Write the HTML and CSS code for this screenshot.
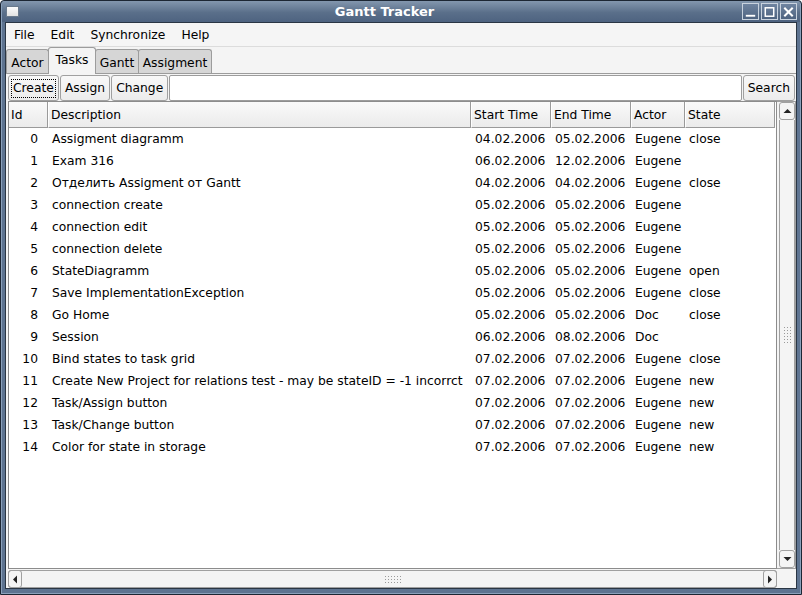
FILE: index.html
```html
<!DOCTYPE html>
<html>
<head>
<meta charset="utf-8">
<link rel="stylesheet" href="styles.css">
</head>
<body>
<div class="window">
  <div class="titlebar">
    <div class="wicon"></div>
    <div class="title">Gantt Tracker</div>
    <div class="wbtns">
      <div class="wbtn"><svg width="16" height="16" viewBox="0 0 16 16"><rect x="3" y="11" width="10" height="2" fill="#fff"/></svg></div>
      <div class="wbtn"><svg width="16" height="16" viewBox="0 0 16 16"><rect x="3.5" y="3.5" width="9" height="9" fill="none" stroke="#fff" stroke-width="1.6"/></svg></div>
      <div class="wbtn"><svg width="16" height="16" viewBox="0 0 16 16"><path d="M3.5 3.5 L12.5 12.5 M12.5 3.5 L3.5 12.5" stroke="#fff" stroke-width="2.2"/></svg></div>
    </div>
  </div>
  <div class="client">
    <div class="menubar">
      <span class="menu">File</span>
      <span class="menu">Edit</span>
      <span class="menu">Synchronize</span>
      <span class="menu">Help</span>
    </div>
    <div class="tabbar">
      <div class="tab t-actor">Actor</div>
      <div class="tab active t-tasks">Tasks</div>
      <div class="tab t-gantt">Gantt</div>
      <div class="tab t-assig">Assigment</div>
    </div>
    <div class="panel">
      <div class="toolbar">
        <div class="btn focus"><span>Create</span></div>
        <div class="btn">Assign</div>
        <div class="btn">Change</div>
        <div class="search"></div>
        <div class="btn">Search</div>
      </div>
      <div class="gridarea">
        <div class="table">
          <div class="row head">
            <div class="c id">Id</div>
            <div class="c desc">Description</div>
            <div class="c st">Start Time</div>
            <div class="c et">End Time</div>
            <div class="c ac">Actor</div>
            <div class="c sa">State</div>
          </div>
          <div class="body">
            <div class="row"><div class="c id">0</div><div class="c desc">Assigment diagramm</div><div class="c st">04.02.2006</div><div class="c et">05.02.2006</div><div class="c ac">Eugene</div><div class="c sa">close</div></div>
            <div class="row"><div class="c id">1</div><div class="c desc">Exam 316</div><div class="c st">06.02.2006</div><div class="c et">12.02.2006</div><div class="c ac">Eugene</div><div class="c sa"></div></div>
            <div class="row"><div class="c id">2</div><div class="c desc">Отделить Assigment от Gantt</div><div class="c st">04.02.2006</div><div class="c et">04.02.2006</div><div class="c ac">Eugene</div><div class="c sa">close</div></div>
            <div class="row"><div class="c id">3</div><div class="c desc">connection create</div><div class="c st">05.02.2006</div><div class="c et">05.02.2006</div><div class="c ac">Eugene</div><div class="c sa"></div></div>
            <div class="row"><div class="c id">4</div><div class="c desc">connection edit</div><div class="c st">05.02.2006</div><div class="c et">05.02.2006</div><div class="c ac">Eugene</div><div class="c sa"></div></div>
            <div class="row"><div class="c id">5</div><div class="c desc">connection delete</div><div class="c st">05.02.2006</div><div class="c et">05.02.2006</div><div class="c ac">Eugene</div><div class="c sa"></div></div>
            <div class="row"><div class="c id">6</div><div class="c desc">StateDiagramm</div><div class="c st">05.02.2006</div><div class="c et">05.02.2006</div><div class="c ac">Eugene</div><div class="c sa">open</div></div>
            <div class="row"><div class="c id">7</div><div class="c desc">Save ImplementationException</div><div class="c st">05.02.2006</div><div class="c et">05.02.2006</div><div class="c ac">Eugene</div><div class="c sa">close</div></div>
            <div class="row"><div class="c id">8</div><div class="c desc">Go Home</div><div class="c st">05.02.2006</div><div class="c et">05.02.2006</div><div class="c ac">Doc</div><div class="c sa">close</div></div>
            <div class="row"><div class="c id">9</div><div class="c desc">Session</div><div class="c st">06.02.2006</div><div class="c et">08.02.2006</div><div class="c ac">Doc</div><div class="c sa"></div></div>
            <div class="row"><div class="c id">10</div><div class="c desc">Bind states to task grid</div><div class="c st">07.02.2006</div><div class="c et">07.02.2006</div><div class="c ac">Eugene</div><div class="c sa">close</div></div>
            <div class="row"><div class="c id">11</div><div class="c desc">Create New Project for relations test - may be stateID = -1 incorrct</div><div class="c st">07.02.2006</div><div class="c et">07.02.2006</div><div class="c ac">Eugene</div><div class="c sa">new</div></div>
            <div class="row"><div class="c id">12</div><div class="c desc">Task/Assign button</div><div class="c st">07.02.2006</div><div class="c et">07.02.2006</div><div class="c ac">Eugene</div><div class="c sa">new</div></div>
            <div class="row"><div class="c id">13</div><div class="c desc">Task/Change button</div><div class="c st">07.02.2006</div><div class="c et">07.02.2006</div><div class="c ac">Eugene</div><div class="c sa">new</div></div>
            <div class="row"><div class="c id">14</div><div class="c desc">Color for state in storage</div><div class="c st">07.02.2006</div><div class="c et">07.02.2006</div><div class="c ac">Eugene</div><div class="c sa">new</div></div>
          </div>
        </div>
        <div class="vscroll">
          <div class="sbtn"><svg width="9" height="6" viewBox="0 0 9 6"><path d="M0.5 5 L4.5 1 L8.5 5 Z" fill="#222"/></svg></div>
          <div class="vthumb"><div class="grip vgrip"></div></div>
          <div class="sbtn"><svg width="9" height="6" viewBox="0 0 9 6"><path d="M0.5 1 L4.5 5 L8.5 1 Z" fill="#222"/></svg></div>
        </div>
        <div class="hscroll">
          <div class="hbtn"><svg width="6" height="9" viewBox="0 0 6 9"><path d="M5 0.5 L1 4.5 L5 8.5 Z" fill="#222"/></svg></div>
          <div class="hthumb"><div class="grip hgrip"></div></div>
          <div class="hbtn"><svg width="6" height="9" viewBox="0 0 6 9"><path d="M1 0.5 L5 4.5 L1 8.5 Z" fill="#222"/></svg></div>
        </div>
        <div class="corner"></div>
      </div>
    </div>
  </div>
</div>
</body>
</html>
```
FILE: styles.css
```css
* { box-sizing: border-box; }
html, body { margin: 0; padding: 0; }
body {
  width: 802px;
  height: 595px;
  overflow: hidden;
  font-family: "DejaVu Sans", sans-serif;
  font-size: 12.3px;
  color: #000;
  background: #fff;
}
.window {
  width: 802px;
  height: 595px;
  display: flex;
  flex-direction: column;
  background: #5d7390;
  border: 1px solid #1c2633;
  border-radius: 4px 4px 0 0;
  padding: 0 4px 5px 4px;
  box-shadow: inset 0 0 0 1px #8aa0ba;
}
.titlebar {
  height: 21px;
  display: flex;
  align-items: center;
  position: relative;
  background: linear-gradient(#8397ae, #5a6f8a 55%, #4e6380);
  margin: 0 -3px;
  padding: 0 3px;
  border-radius: 3px 3px 0 0;
}
.wicon {
  width: 13px;
  height: 11px;
  margin-left: 1px;
  background: linear-gradient(#fcfcfc, #e2e2e2);
  border: 1px solid #6a7a8c;
}
.title {
  flex: 1;
  text-align: center;
  color: #fff;
  font-weight: bold;
  font-size: 13px;
  padding-left: 8px;
}
.wbtns { display: flex; gap: 2px; }
.wbtn {
  width: 17px;
  height: 17px;
  border: 1px solid #c8d2de;
  background: linear-gradient(#6f84a0, #4e6380);
  display: flex;
  align-items: center;
  justify-content: center;
}
.wbtn svg { display: block; }
.client {
  flex: 1;
  display: flex;
  flex-direction: column;
  background: #f4f4f4;
  border: 1px solid #2a3644;
  min-height: 0;
}
.menubar {
  height: 24px;
  display: flex;
  align-items: center;
  border-bottom: 1px solid #dcdcdc;
  background: #f5f5f5;
}
.menu { padding: 0 8px; line-height: 24px; }
.tabbar {
  height: 26px;
  display: flex;
  align-items: flex-end;
  position: relative;
  z-index: 1;
}
.tab {
  height: 24px;
  padding-top: 2px;
  display: flex;
  align-items: center;
  justify-content: center;
  background: #d6d6d6;
  border: 1px solid #9c9c9c;
  border-bottom: none;
  border-radius: 3px 3px 0 0;
  margin-right: -1px;
}
.t-actor { width: 43px; }
.t-tasks { width: 48px; }
.t-gantt { width: 44px; }
.t-assig { width: 74px; }
.tab.active {
  height: 27px;
  background: #f4f4f4;
  padding: 0 0 2px 0;
  margin-bottom: -1px;
  position: relative;
}
.panel {
  flex: 1;
  display: flex;
  flex-direction: column;
  border-top: 1px solid #9c9c9c;
  padding: 1px 1px 0 2px;
  min-height: 0;
}
.toolbar {
  height: 26px;
  display: flex;
  align-items: stretch;
  gap: 1px;
}
.btn {
  display: flex;
  align-items: center;
  padding: 0 4px;
  background: linear-gradient(#f8f8f8, #ececec);
  border: 1px solid #a0a0a0;
  border-radius: 3px;
}
.btn.focus { padding: 0 2.5px 0 2.5px; }
.btn.focus span {
  outline: 1px dotted #000;
  outline-offset: 0;
  padding: 1px 1.5px 2px 1.5px;
}
.search {
  flex: 1;
  background: #fff;
  border: 1px solid #9c9c9c;
  border-radius: 2px;
}
.gridarea {
  flex: 1;
  display: grid;
  grid-template-columns: 769px 19px;
  grid-template-rows: 1fr 18px;
  gap: 1px 0;
  min-height: 0;
}
.table {
  background: #fff;
  border: 1px solid #8c8c8c;
  overflow: hidden;
}
.row {
  display: grid;
  grid-template-columns: 39px 423px 80px 80px 54px 90px;
  height: 22px;
  align-items: center;
  white-space: nowrap;
}
.row .c { padding-left: 4px; overflow: hidden; }
.row .c.id { text-align: right; padding-right: 10px; }
.row.head {
  height: 26px;
  align-items: stretch;
}
.row.head .c {
  display: flex;
  align-items: center;
  background: linear-gradient(#f9f9f9, #ebebeb);
  border-right: 1px solid #9a9a9a;
  border-bottom: 1px solid #9a9a9a;
  border-left: 1px solid #fff;
  padding-left: 2px;
}
.row.head .c.id { padding-right: 0; padding-left: 2px; border-left: none; }
.vscroll {
  display: flex;
  flex-direction: column;
  border: 1px solid #a0a0a0;
  border-left: none;
  background: #f4f4f4;
  padding-left: 2px;
}
.sbtn {
  height: 18px;
  display: flex;
  align-items: center;
  justify-content: center;
  border: 1px solid #a0a0a0;
  border-radius: 3px;
  background: #f4f4f4;
}
.vthumb {
  flex: 1;
  border-left: 1px solid #a0a0a0;
  border-right: 1px solid #a0a0a0;
  display: flex;
  align-items: center;
  justify-content: center;
}
.grip {
  background-image: radial-gradient(circle, #9a9a9a 0.8px, transparent 1px);
  background-size: 3px 3px;
}
.vgrip { width: 9px; height: 18px; }
.hgrip { width: 18px; height: 9px; }
.hscroll {
  display: flex;
  border: 1px solid #a0a0a0;
  border-radius: 3px;
  background: #f4f4f4;
}
.hbtn {
  width: 14px;
  display: flex;
  align-items: center;
  justify-content: center;
  border: 1px solid #a0a0a0;
  border-radius: 3px;
  margin: -1px;
}
.hthumb {
  flex: 1;
  display: flex;
  align-items: center;
  justify-content: center;
}
.corner { background: #f4f4f4; }
```
